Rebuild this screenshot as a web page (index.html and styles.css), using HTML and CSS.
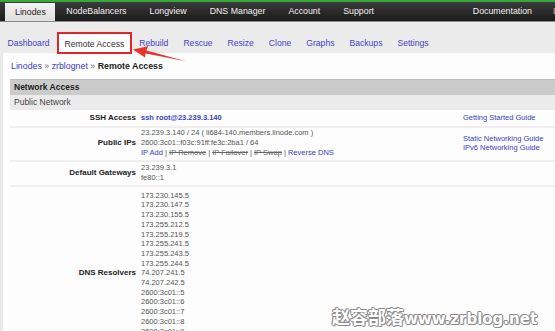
FILE: index.html
```html
<!DOCTYPE html>
<html>
<head>
<meta charset="utf-8">
<link rel="stylesheet" href="styles.css">
</head>
<body>
<div class="topline"></div>
<nav class="nav">
  <a class="nav-item active">Linodes</a>
  <a class="nav-item">NodeBalancers</a>
  <a class="nav-item">Longview</a>
  <a class="nav-item">DNS Manager</a>
  <a class="nav-item">Account</a>
  <a class="nav-item">Support</a>
  <a class="nav-item doc">Documentation</a>
  <a class="nav-item last">Log Out</a>
</nav>
<div class="subnav">
  <a class="sub-item">Dashboard</a>
  <a class="sub-item current">Remote Access</a>
  <a class="sub-item">Rebuild</a>
  <a class="sub-item">Rescue</a>
  <a class="sub-item">Resize</a>
  <a class="sub-item">Clone</a>
  <a class="sub-item">Graphs</a>
  <a class="sub-item">Backups</a>
  <a class="sub-item">Settings</a>
</div>
<main class="panel">
  <div class="crumbs"><a class="link">Linodes</a> <span class="sep">»</span> <a class="link">zrblognet</a> <span class="sep">»</span> <b>Remote Access</b></div>
  <section class="table">
    <div class="thead">Network Access</div>
    <div class="subhead">Public Network</div>
    <div class="row ssh">
      <div class="label">SSH Access</div>
      <div class="value"><a class="link strong">ssh root@23.239.3.140</a></div>
      <div class="guide"><a class="link">Getting Started Guide</a></div>
    </div>
    <div class="row ips">
      <div class="label">Public IPs</div>
      <div class="value">
        <div>23.239.3.140 / 24 ( li684-140.members.linode.com )</div>
        <div>2600:3c01::f03c:91ff:fe3c:2ba1 / 64</div>
        <div><a class="link">IP Add</a> | <s>IP Remove</s> | <s>IP Failover</s> | <s>IP Swap</s> | <a class="link">Reverse DNS</a></div>
      </div>
      <div class="guide">
        <div><a class="link">Static Networking Guide</a></div>
        <div><a class="link">IPv6 Networking Guide</a></div>
      </div>
    </div>
    <div class="row gw">
      <div class="label">Default Gateways</div>
      <div class="value">
        <div>23.239.3.1</div>
        <div>fe80::1</div>
      </div>
      <div class="guide"></div>
    </div>
    <div class="row dns">
      <div class="label">DNS Resolvers</div>
      <div class="value">
        <div>173.230.145.5</div>
        <div>173.230.147.5</div>
        <div>173.230.155.5</div>
        <div>173.255.212.5</div>
        <div>173.255.219.5</div>
        <div>173.255.241.5</div>
        <div>173.255.243.5</div>
        <div>173.255.244.5</div>
        <div>74.207.241.5</div>
        <div>74.207.242.5</div>
        <div>2600:3c01::5</div>
        <div>2600:3c01::6</div>
        <div>2600:3c01::7</div>
        <div>2600:3c01::8</div>
        <div>2600:3c01::9</div>
        <div>2600:3c01::b</div>
        <div>2600:3c01::c</div>
      </div>
      <div class="guide"></div>
    </div>
  </section>
</main>
<svg class="arrow" width="555" height="331" viewBox="0 0 555 331">
  <polygon points="133,49.5 148,46.2 146.4,50.6 186,61.2 145.6,53.4 145,57.6" fill="#e8322b"/>
</svg>
<div class="watermark"><span class="wm-cn">赵容部落</span><span class="wm-en">www.zrblog.net</span></div>
</body>
</html>
```

FILE: styles.css
```css
html, body {
  margin: 0;
  padding: 0;
  width: 555px;
  height: 331px;
  overflow: hidden;
}
body {
  background: #e9e9e9;
  font-family: "Liberation Sans", Arial, sans-serif;
  color: #555;
  position: relative;
}
a { text-decoration: none; }

.topline {
  height: 2px;
  background: #36a83c;
}
.nav {
  display: flex;
  height: 19px;
  background: linear-gradient(#3b3b3b, #1b1b1b);
  border-bottom: 1px solid #8a8a8a;
  font-size: 8.8px;
  white-space: nowrap;
  overflow: hidden;
}
.nav-item {
  color: #f0f0f0;
  padding: 0 11.5px;
  line-height: 19px;
  flex: none;
}
.nav-item.active {
  margin-left: 5px;
  margin-top: 1px;
  padding: 0 9px 0 10px;
  line-height: 18px;
  background: linear-gradient(#f2f2f2, #dedede);
  color: #222;
}
.nav-item.doc {
  margin-left: auto;
  padding-right: 10px;
}
.nav-item.last {
  padding: 0 0 0 11px;
  width: 2px;
  overflow: hidden;
  color: #bbb;
}

.subnav {
  display: flex;
  align-items: flex-end;
  height: 31px;
  background: #ebebeb;
  font-size: 8.6px;
  white-space: nowrap;
}
.sub-item {
  color: #4343c6;
  padding: 2px 7.5px 0;
  height: 20px;
  line-height: 20px;
}
.sub-item.current {
  position: relative;
  z-index: 1;
  margin-bottom: -1px;
  border: 2px solid #e3242a;
  padding: 0 5.5px;
  height: 18px;
  line-height: 20px;
  background: #fff;
  color: #333;
}

.panel {
  margin-left: 3px;
  background: #fdfdfd;
  padding: 7px 0 0 7px;
  height: 400px;
}
.crumbs {
  font-size: 8.8px;
  line-height: 12px;
  padding-left: 1px;
  color: #222;
}
.crumbs .sep { color: #666; }
.crumbs b { font-weight: bold; color: #222; }
.link { color: #3c3cc4; }
.link.strong { font-weight: bold; }

.table {
  margin-top: 7px;
}
.thead {
  height: 15px;
  line-height: 15px;
  border-top: 1px solid #bdbdbd;
  background: #cbcbcb;
  font-weight: bold;
  font-size: 8.5px;
  color: #222;
  padding-left: 4px;
}
.subhead {
  height: 15px;
  line-height: 15px;
  background: #ebebeb;
  font-size: 8.5px;
  color: #444;
  padding-left: 4px;
}
.row {
  display: grid;
  grid-template-columns: 131px 322px 1fr;
  border-bottom: 2px solid #efefef;
  font-size: 7.5px;
  line-height: 9.7px;
}
.label {
  align-self: center;
  text-align: right;
  padding-right: 5px;
  font-weight: bold;
  font-size: 8px;
  color: #222;
}
.value {
  color: #555;
}
.value s { color: #666; }
.guide {
  align-self: center;
  line-height: 9.2px;
}
.row.ssh { padding: 3px 0 3px; }
.row.ips { padding: 0.5px 0 3px; }
.row.gw { padding: 0.5px 0 3px; }
.row.dns { padding: 3.5px 0 4px; }

.arrow {
  position: absolute;
  left: 0;
  top: 0;
  pointer-events: none;
}
.watermark {
  position: absolute;
  left: 332px;
  top: 305px;
  white-space: nowrap;
  color: #fff;
  font-weight: bold;
  text-shadow: 1px 0 0 #8a8a8a, -1px 0 0 #8a8a8a, 0 1px 0 #8a8a8a, 0 -1px 0 #8a8a8a, 1px 1px 0 #9a9aaa, -1px -1px 0 #aa9a9a;
}
.wm-cn {
  font-family: "Noto Sans CJK SC", sans-serif;
  font-size: 18px;
  line-height: 22px;
}
.wm-en {
  font-family: "DejaVu Sans", sans-serif;
  font-size: 15px;
  line-height: 22px;
}
```
